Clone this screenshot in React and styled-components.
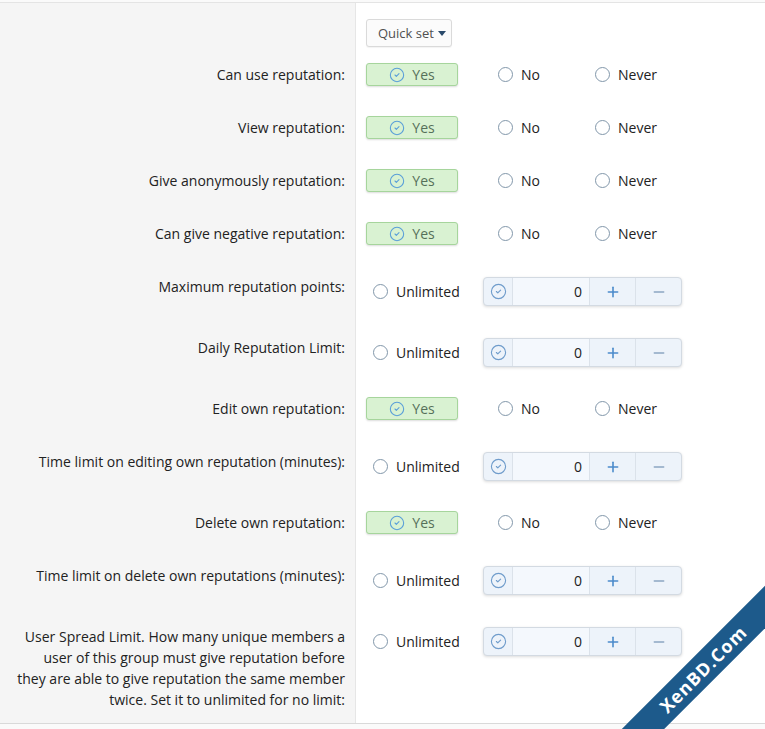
import React from "react";
import styled, { createGlobalStyle } from "styled-components";
import { CircleCheck, Plus, Minus } from "lucide-react";

const rows = [
  { label: "Can use reputation:", type: "yesno" },
  { label: "View reputation:", type: "yesno" },
  { label: "Give anonymously reputation:", type: "yesno" },
  { label: "Can give negative reputation:", type: "yesno" },
  { label: "Maximum reputation points:", type: "number" },
  { label: "Daily Reputation Limit:", type: "number" },
  { label: "Edit own reputation:", type: "yesno" },
  { label: "Time limit on editing own reputation (minutes):", type: "number" },
  { label: "Delete own reputation:", type: "yesno" },
  { label: "Time limit on delete own reputations (minutes):", type: "number" },
  {
    label: [
      "User Spread Limit. How many unique members a",
      "user of this group must give reputation before",
      "they are able to give reputation the same member",
      "twice. Set it to unlimited for no limit:",
    ],
    type: "number",
    grow: true,
  },
];

const Radio = ({ text, width }) => (
  <Choice $width={width}>
    <RadioDot />
    <span>{text}</span>
  </Choice>
);

const YesNoControls = () => (
  <ChoiceRow>
    <YesButton>
      <CircleCheck size={16} strokeWidth={1.6} />
      <span>Yes</span>
    </YesButton>
    <Radio text="No" width="97px" />
    <Radio text="Never" />
  </ChoiceRow>
);

const NumberControls = () => (
  <ChoiceRow $tall>
    <Radio text="Unlimited" width="117px" />
    <InputGroup>
      <CheckCell>
        <CircleCheck size={17} strokeWidth={1.6} />
      </CheckCell>
      <NumberField>0</NumberField>
      <StepButton>
        <Plus size={16} strokeWidth={2.4} />
      </StepButton>
      <StepButton $muted>
        <Minus size={16} strokeWidth={2.4} />
      </StepButton>
    </InputGroup>
  </ChoiceRow>
);

const App = () => {
  return (
    <>
      <GlobalStyle />
      <Page>
        <Form>
          <Row>
            <Label />
            <Controls $top="16px" $bottom="1px">
              <QuickSet>
                Quick set
                <svg width="8" height="5" viewBox="0 0 8 5">
                  <path d="M0 0h8L4 5z" fill="#2a4a6b" />
                </svg>
              </QuickSet>
            </Controls>
          </Row>
          {rows.map((row, i) => (
            <Row key={i} $grow={row.grow}>
              <Label>
                {Array.isArray(row.label)
                  ? row.label.map((line, j) => <div key={j}>{line}</div>)
                  : row.label}
              </Label>
              <Controls $top={row.type === "number" ? "17px" : "15px"}>
                {row.type === "number" ? <NumberControls /> : <YesNoControls />}
              </Controls>
            </Row>
          ))}
        </Form>
        <Ribbon>XenBD.Com</Ribbon>
      </Page>
    </>
  );
};

export default App;

const GlobalStyle = createGlobalStyle`
  html, body {
    margin: 0;
    padding: 0;
    background: #fafafa;
  }
  body {
    font-family: "Open Sans", "Noto Sans", sans-serif;
    color: #222;
  }
  * {
    box-sizing: border-box;
  }
`;

const Page = styled.div`
  position: relative;
  width: 765px;
  height: 729px;
  padding-top: 2px;
  overflow: hidden;
  background: #fafafa;
`;

const Form = styled.div`
  display: flex;
  flex-direction: column;
  height: 722px;
  background: #fff;
  border-top: 1px solid #e4e4e4;
  border-bottom: 1px solid #d9d9d9;
`;

const Row = styled.div`
  display: flex;
  align-items: stretch;
  flex: ${(p) => (p.$grow ? 1 : "none")};
`;

const Label = styled.div`
  width: 356px;
  flex: none;
  padding: 16px 10px 0 10px;
  background: #f5f5f5;
  border-right: 1px solid #e6e6e6;
  text-align: right;
  font-size: 14px;
  line-height: 21px;
  color: #222;
`;

const Controls = styled.div`
  flex: 1;
  padding: ${(p) => p.$top} 0 ${(p) => p.$bottom || "15px"} 10px;
`;

const QuickSet = styled.button`
  display: flex;
  align-items: center;
  gap: 4px;
  width: 86px;
  height: 28px;
  padding: 0 0 0 11px;
  border: 1px solid #dadada;
  border-radius: 3px;
  background: #fbfbfb;
  box-shadow: 0 1px 1px rgba(0, 0, 0, 0.05);
  font-family: inherit;
  font-size: 13px;
  color: #505050;
`;

const ChoiceRow = styled.div`
  display: flex;
  align-items: center;
  height: ${(p) => (p.$tall ? "29px" : "23px")};
`;

const YesButton = styled.div`
  display: flex;
  align-items: center;
  justify-content: center;
  gap: 7px;
  width: 92px;
  height: 23px;
  margin-right: 33px;
  background: #d9f2d2;
  border: 1px solid #a6d59c;
  border-radius: 3px;
  box-shadow: 0 1px 2px rgba(0, 0, 0, 0.14);
  font-size: 14px;
  color: #56705a;
  & svg {
    color: #5a9fd8;
  }
`;

const Choice = styled.div`
  display: flex;
  align-items: center;
  gap: 8px;
  width: ${(p) => p.$width || "auto"};
  padding-left: 7px;
  font-size: 14px;
  color: #222;
`;

const RadioDot = styled.span`
  width: 15px;
  height: 15px;
  border: 1.5px solid #8297aa;
  border-radius: 50%;
  background: #fff;
`;

const InputGroup = styled.div`
  display: flex;
  width: 199px;
  height: 29px;
  border: 1px solid #d3dae2;
  border-radius: 4px;
  background: #edf3fa;
  box-shadow: 0 1px 3px rgba(0, 0, 0, 0.14);
  overflow: hidden;
`;

const CheckCell = styled.div`
  display: flex;
  align-items: center;
  justify-content: center;
  width: 29px;
  border-right: 1px solid #dbe2ea;
  color: #6f9ccb;
`;

const NumberField = styled.div`
  flex: 1;
  display: flex;
  align-items: center;
  justify-content: flex-end;
  padding-right: 7px;
  background: #f4f8fd;
  font-size: 14px;
  color: #222;
`;

const StepButton = styled.div`
  display: flex;
  align-items: center;
  justify-content: center;
  width: 46px;
  border-left: 1px solid #dbe2ea;
  color: ${(p) => (p.$muted ? "#8ca6c2" : "#4b8bcb")};
`;

const Ribbon = styled.div`
  position: absolute;
  left: 553px;
  top: 654px;
  width: 300px;
  height: 30px;
  transform: rotate(-45deg);
  background: #1d5a8b;
  color: #fff;
  font-family: "Open Sans", sans-serif;
  font-weight: 700;
  font-size: 18px;
  letter-spacing: 1px;
  line-height: 30px;
  text-align: center;
`;
